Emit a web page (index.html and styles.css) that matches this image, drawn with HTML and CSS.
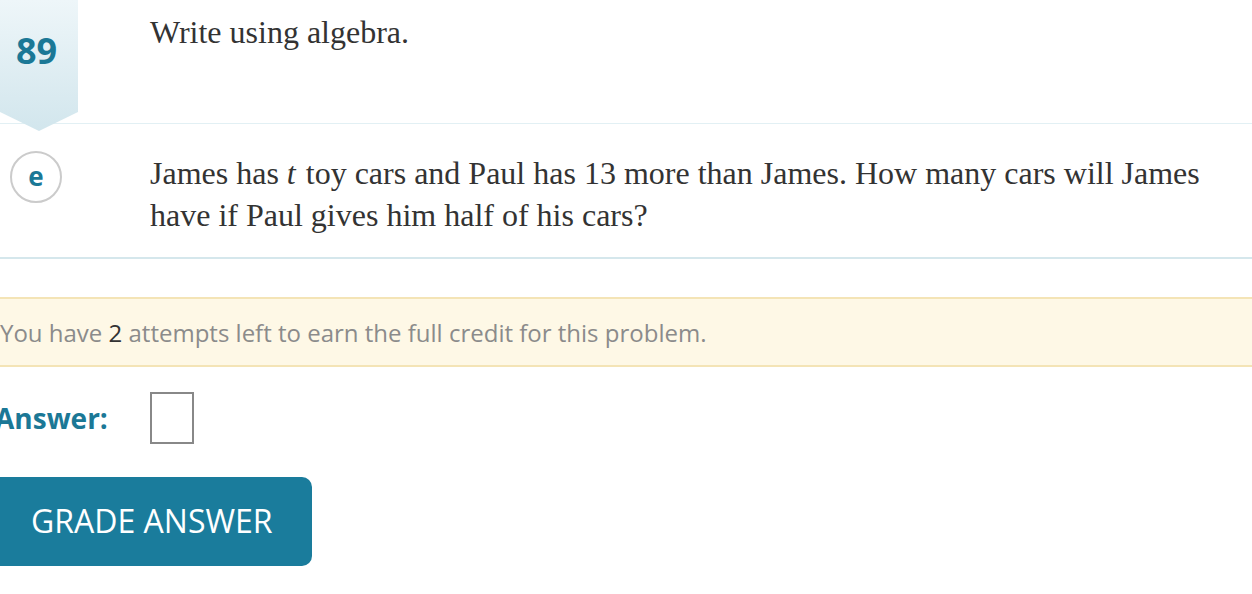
FILE: index.html
```html
<!DOCTYPE html>
<html>
<head>
<meta charset="utf-8">
<link rel="stylesheet" href="styles.css">
</head>
<body>
<div class="page">
  <div class="row row-head">
    <div class="side">
      <div class="badge"><span class="num">89</span></div>
    </div>
    <div class="text">Write using algebra.</div>
  </div>
  <div class="row row-part">
    <div class="side">
      <div class="part-circle">e</div>
    </div>
    <div class="text">James has <i class="var">t</i> toy cars and Paul has 13 more than James. How many cars will James have if Paul gives him half of his cars?</div>
  </div>
  <div class="answer-area">
    <div class="alert">You have&nbsp;<span class="count">2</span>&nbsp;attempts left to earn the full credit for this problem.</div>
    <div class="answer-row">
      <span class="answer-label">Answer:</span>
      <span class="answer-box"></span>
    </div>
    <button class="grade-btn">GRADE ANSWER</button>
  </div>
</div>
</body>
</html>
```
FILE: styles.css
```css
* { box-sizing: border-box; }
html, body { margin: 0; padding: 0; background: #fff; }
body { overflow: hidden; }
.page { width: 1252px; }

.row { display: flex; }
.side { width: 150px; flex: none; }
.text {
  flex: 1;
  font-family: "Liberation Serif", "Times New Roman", serif;
  font-size: 32px;
  line-height: 42px;
  color: #333;
  padding-right: 20px;
}
.row-head {
  height: 124px;
  border-bottom: 1px solid #e2f0f4;
}
.row-head .text { padding-top: 10px; line-height: 44px; }

.badge {
  position: relative;
  z-index: 1;
  width: 78px;
  height: 131px;
  background: linear-gradient(to bottom, #eef6f9 0%, #d2e6ed 100%);
  clip-path: polygon(0 0, 100% 0, 100% 85.5%, 50% 100%, 0 85.5%);
  display: flex;
  justify-content: center;
  padding: 31px 5px 0 0;
}
.num {
  font-family: "Open Sans", sans-serif;
  font-weight: 700;
  font-size: 36px;
  line-height: 40px;
  color: #1b7896;
}

.row-part {
  padding: 28px 0 21px;
  border-bottom: 2px solid #d5e7ec;
}
.part-circle {
  margin-left: 10px;
  margin-top: -1px;
  width: 52px;
  height: 52px;
  border: 2px solid #cbcbcb;
  border-radius: 50%;
  display: flex;
  align-items: center;
  justify-content: center;
  font-family: "Open Sans", sans-serif;
  font-weight: 700;
  font-size: 26px;
  color: #1b7896;
  padding-bottom: 2px;
}
.var { font-style: italic; margin-right: 2px; }

.answer-area { margin-left: -10px; padding-top: 38px; }
.alert {
  height: 70px;
  background: #fef8e6;
  border-top: 2px solid #f4e4b6;
  border-bottom: 2px solid #f4e4b6;
  padding-left: 10px;
  display: flex;
  align-items: center;
  font-family: "Open Sans", sans-serif;
  font-size: 24px;
  color: #8b8b8b;
  white-space: pre;
}
.count { color: #333; }

.answer-row {
  display: flex;
  align-items: center;
  margin-top: 25px;
  height: 52px;
}
.answer-label {
  width: 160px;
  padding-left: 5px;
  font-family: "Open Sans", sans-serif;
  font-weight: 700;
  font-size: 28px;
  color: #1b7896;
}
.answer-box {
  width: 44px;
  height: 52px;
  border: 2px solid #888;
  background: #fff;
}

.grade-btn {
  display: block;
  margin-top: 33px;
  width: 322px;
  height: 89px;
  border: none;
  border-radius: 10px;
  background: #1a7c9c;
  color: #fff;
  font-family: "Open Sans", sans-serif;
  font-size: 32px;
  text-align: left;
  padding: 0 0 2px 41px;
}
```
